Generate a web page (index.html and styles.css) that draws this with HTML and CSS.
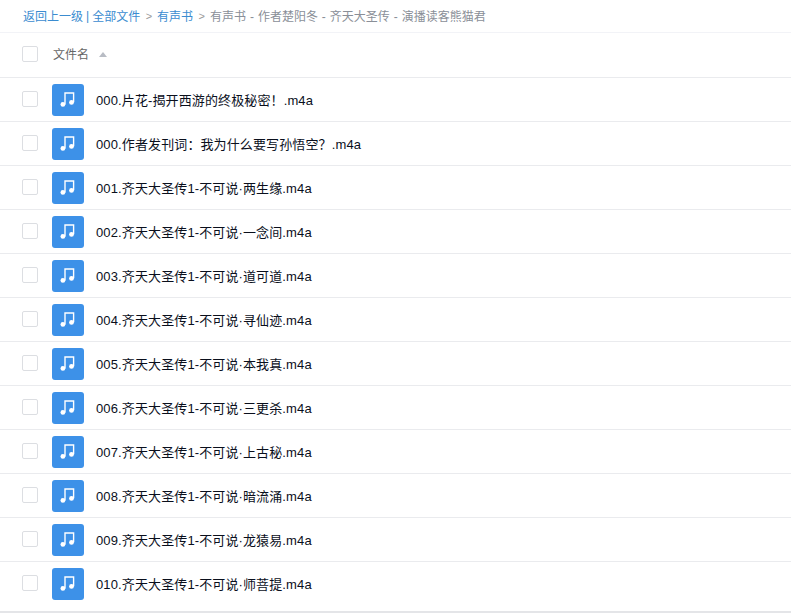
FILE: index.html
```html
<!DOCTYPE html>
<html lang="zh-CN">
<head>
<meta charset="utf-8">
<title>有声书</title>
<link rel="stylesheet" href="styles.css">
</head>
<body>
<svg class="defs" width="0" height="0" aria-hidden="true"><defs>
<symbol id="note" viewBox="0 0 32 32"><path d="M13 20.5V9h8.6v9.2" fill="none" stroke="#fff" stroke-width="1.4"/><circle cx="10.9" cy="20.4" r="2.4" fill="#fff"/><circle cx="19.5" cy="18.4" r="2.4" fill="#fff"/></symbol>
</defs></svg>
<nav class="crumbs"><a>返回上一级</a><span class="sep-bar">|</span><a>全部文件</a><span class="gt">&gt;</span><a>有声书</a><span class="gt">&gt;</span><span class="cur">有声书 - 作者楚阳冬 - 齐天大圣传 - 演播读客熊猫君</span></nav>
<div class="head"><span class="check"></span><span class="head-label">文件名</span><span class="caret"></span></div>
<ul class="list">
<li class="row"><span class="check"></span><svg class="icon"><use href="#note"/></svg><span class="name">000.片花-揭开西游的终极秘密！.m4a</span></li>
<li class="row"><span class="check"></span><svg class="icon"><use href="#note"/></svg><span class="name">000.作者发刊词：我为什么要写孙悟空？.m4a</span></li>
<li class="row"><span class="check"></span><svg class="icon"><use href="#note"/></svg><span class="name">001.齐天大圣传1-不可说·两生缘.m4a</span></li>
<li class="row"><span class="check"></span><svg class="icon"><use href="#note"/></svg><span class="name">002.齐天大圣传1-不可说·一念间.m4a</span></li>
<li class="row"><span class="check"></span><svg class="icon"><use href="#note"/></svg><span class="name">003.齐天大圣传1-不可说·道可道.m4a</span></li>
<li class="row"><span class="check"></span><svg class="icon"><use href="#note"/></svg><span class="name">004.齐天大圣传1-不可说·寻仙迹.m4a</span></li>
<li class="row"><span class="check"></span><svg class="icon"><use href="#note"/></svg><span class="name">005.齐天大圣传1-不可说·本我真.m4a</span></li>
<li class="row"><span class="check"></span><svg class="icon"><use href="#note"/></svg><span class="name">006.齐天大圣传1-不可说·三更杀.m4a</span></li>
<li class="row"><span class="check"></span><svg class="icon"><use href="#note"/></svg><span class="name">007.齐天大圣传1-不可说·上古秘.m4a</span></li>
<li class="row"><span class="check"></span><svg class="icon"><use href="#note"/></svg><span class="name">008.齐天大圣传1-不可说·暗流涌.m4a</span></li>
<li class="row"><span class="check"></span><svg class="icon"><use href="#note"/></svg><span class="name">009.齐天大圣传1-不可说·龙猿易.m4a</span></li>
<li class="row"><span class="check"></span><svg class="icon"><use href="#note"/></svg><span class="name">010.齐天大圣传1-不可说·师菩提.m4a</span></li>
</ul>
</body>
</html>
```
FILE: styles.css
```css
* { box-sizing: border-box; }
html, body { margin: 0; padding: 0; background: #fff; overflow: hidden; }
body { height: 614px; font-family: "Liberation Sans", "Noto Sans CJK SC", sans-serif; }
.defs { position: absolute; }
.crumbs { height: 33px; padding-left: 23px; border-bottom: 1px solid #f2f3f7; display: flex; align-items: center; font-size: 12px; color: #3b8cd0; padding-bottom: 1px; white-space: nowrap; }
.sep-bar { margin: 0 3px; }
.gt { margin: 0 5px 0 5.5px; color: #999; font-size: 11px; }
.cur { color: #8a8f98; word-spacing: 0.6px; }
.head { height: 45px; padding-left: 22px; border-bottom: 1px solid #eaebee; display: flex; align-items: center; padding-bottom: 2px; }
.head-label { margin: -2px 0 0 15px; font-size: 12px; color: #666; }
.caret { margin-left: 10px; width: 0; height: 0; border-left: 4.5px solid transparent; border-right: 4.5px solid transparent; border-bottom: 5px solid #b8bcc4; }
.check { width: 16px; height: 16px; flex: none; border: 1px solid #dcdee2; border-radius: 2px; background: #fff; }
.list { list-style: none; margin: 0; padding: 0; }
.row { height: 44px; padding-left: 22px; border-bottom: 1px solid #eaebee; display: flex; align-items: center; }
.row:last-child { height: 51px; padding-bottom: 6px; border-bottom: 2px solid #e4e5e8; }
.row .check { margin-top: -1px; }
.icon { width: 32px; height: 32px; flex: none; margin-left: 14px; background: #3d91e8; border-radius: 3px; }
.name { margin-left: 12px; font-size: 13px; letter-spacing: 0.12px; color: #0a0f1c; white-space: nowrap; }
```
